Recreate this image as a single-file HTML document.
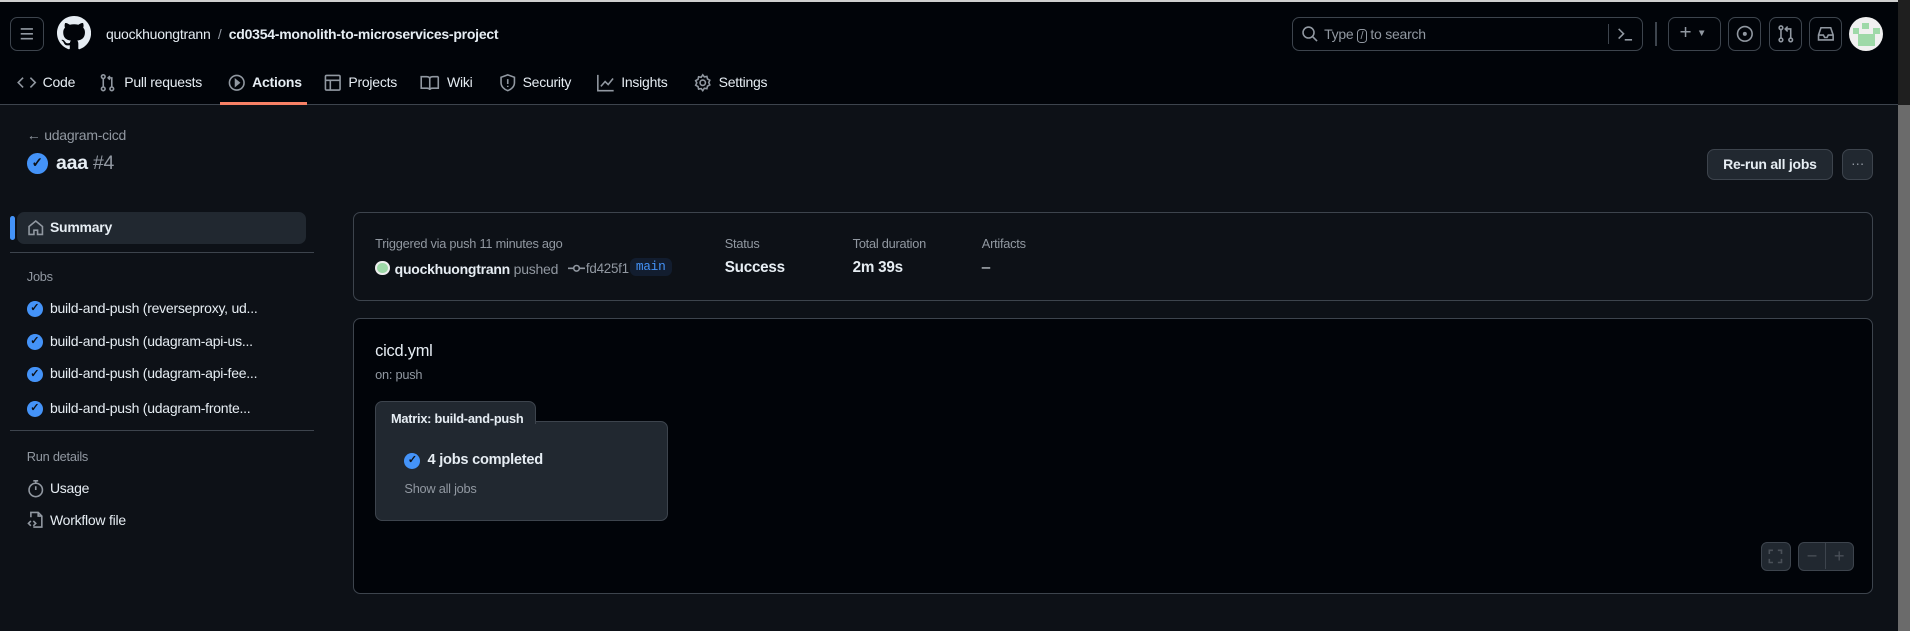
<!DOCTYPE html><html><head><meta charset="utf-8"><style>
*{box-sizing:border-box;margin:0;padding:0}
html,body{width:1910px;height:631px;overflow:hidden;background:#0d1117}
#w{zoom:1.21811;width:1568px;height:518px;position:relative;font-family:"Liberation Sans",sans-serif;color:#e6edf3;font-size:11.5px;background:#0d1117;letter-spacing:-0.2px}
.a{position:absolute;white-space:nowrap}
svg{display:block}
.btn{position:absolute;border:1px solid #3d444d;border-radius:6px}
.ic{fill:none;stroke:#9198a1;stroke-width:1.3}
.t{position:absolute;top:61px;font-size:11.5px}
.ti{position:absolute;top:61px;color:#9198a1;font-size:11.5px}
.ck{position:absolute;width:13px;height:13px;border-radius:50%;background:#4493f8;color:#0d1117;font-size:9px;text-align:center;line-height:13px;font-weight:bold}
</style></head><body><div id="w">
<div class="a" style="left:0;top:0;width:1558px;height:86px;background:#010409;border-bottom:1px solid #3d444d"></div>
<div class="a" style="left:1558px;top:0;width:10px;height:518px;background:#6b6b6b"></div>
<div class="a" style="left:1558px;top:0;width:10px;height:86px;background:#1f1f1f"></div>
<div class="a" style="left:0;top:0;width:1558px;height:2px;background:#cfcfcf"></div>
<div class="btn" style="left:8px;top:14px;width:28px;height:28px"><svg width="26" height="26" class="ic"><path d="M8 9h10M8 13h10M8 17h10"/></svg></div>
<svg class="a" style="left:47px;top:13px" width="28" height="28" viewBox="0 0 16 16"><path fill="#e6edf3" d="M8 0C3.58 0 0 3.58 0 8c0 3.54 2.290 6.53 5.47 7.59.4.07.55-.17.55-.38 0-.19-.01-.82-.01-1.490-2.010.37-2.530-.49-2.690-.94-.09-.23-.48-.94-.82-1.130-.28-.15-.68-.52-.01-.53.63-.01 1.080.58 1.230.82.72 1.210 1.870.87 2.330.66.07-.52.28-.87.51-1.070-1.780-.2-3.640-.89-3.640-3.950 0-.87.31-1.590.82-2.150-.08-.2-.36-1.020.08-2.120 0 0 .67-.21 2.200.82.64-.18 1.320-.27 2-.27.68 0 1.360.09 2 .27 1.530-1.040 2.200-.82 2.200-.82.44 1.100.16 1.920.08 2.120.51.56.82 1.270.82 2.150 0 3.070-1.870 3.750-3.650 3.950.29.25.54.73.54 1.480 0 1.070-.01 1.930-.01 2.200 0 .21.15.46.55.38A8.013 8.013 0 0016 8c0-4.420-3.580-8-8-8z"/></svg>
<div class="a" style="left:87px;top:21px;font-size:11.5px">quockhuongtrann <span style="color:#9198a1;margin:0 3px">/</span> <b>cd0354-monolith-to-microservices-project</b></div>
<div class="btn" style="left:1061px;top:14px;width:288px;height:28px"></div>
<svg class="a ic" style="left:1067px;top:20px" width="16" height="16"><circle cx="7" cy="7" r="4.5"/><path d="M10.5 10.5l3.5 3.5"/></svg>
<div class="a" style="left:1087px;top:21px;font-size:11.5px;color:#9198a1">Type <span style="border:1px solid #9198a1;border-radius:3px;padding:0 2px;font-size:9px">/</span> to search</div>
<div class="a" style="left:1320px;top:20px;width:1px;height:16px;background:#3d444d"></div>
<svg class="a ic" style="left:1326px;top:20px" width="16" height="16"><path d="M3 4l4 4-4 4M8 13h6"/></svg>
<div class="a" style="left:1359px;top:18px;width:1px;height:20px;background:#3d444d"></div>
<div class="btn" style="left:1369px;top:14px;width:44px;height:28px;color:#9198a1;font-size:17px;line-height:24px;padding-left:9px">+ <span style="font-size:8px;vertical-align:middle">▼</span></div>
<div class="btn" style="left:1419px;top:14px;width:27px;height:28px"><svg width="26" height="26" class="ic"><circle cx="13" cy="13" r="6"/><circle cx="13" cy="13" r="1" fill="#9198a1"/></svg></div>
<div class="btn" style="left:1452px;top:14px;width:27px;height:28px"><svg width="26" height="26" class="ic"><circle cx="9" cy="8" r="1.5"/><circle cx="9" cy="18" r="1.5"/><circle cx="17" cy="18" r="1.5"/><path d="M9 9.5v7M17 16.5V9h-4M14.5 7l-2 2 2 2"/></svg></div>
<div class="btn" style="left:1485px;top:14px;width:27px;height:28px"><svg width="26" height="26" class="ic"><path d="M7 14l2-6h8l2 6v4H7zM7 14h4l1 2h2l1-2h4"/></svg></div>
<div class="a" style="left:1518px;top:14px;width:28px;height:28px;border-radius:50%;background:#f0f0f0;overflow:hidden"><div class="a" style="left:11px;top:5px;width:5px;height:5px;background:#9ed9a8"></div><div class="a" style="left:3px;top:9px;width:5px;height:5px;background:#9ed9a8"></div><div class="a" style="left:20px;top:9px;width:5px;height:5px;background:#9ed9a8"></div><div class="a" style="left:7px;top:14px;width:14px;height:10px;background:#9ed9a8"></div></div>
<!-- tabs -->
<svg class="a ic" style="left:14px;top:61px" width="16" height="14"><path d="M5 3L1 7l4 4M11 3l4 4-4 4"/></svg><div class="t" style="left:35px">Code</div>
<svg class="a ic" style="left:81px;top:60px" width="14" height="16"><circle cx="3.5" cy="3" r="1.5"/><circle cx="3.5" cy="13" r="1.5"/><circle cx="10.5" cy="13" r="1.5"/><path d="M3.5 4.5v7M10.5 11.5V4h-3M9 2.5l-1.5 1.5 1.5 1.5"/></svg><div class="t" style="left:102px">Pull requests</div>
<svg class="a ic" style="left:186px;top:60px" width="16" height="16"><circle cx="8" cy="8" r="6"/><path d="M7 5.5l3 2.5-3 2.5z" fill="#9198a1"/></svg><div class="t" style="left:207px;font-weight:bold">Actions</div>
<svg class="a ic" style="left:265px;top:60px" width="16" height="16"><rect x="2" y="2" width="12" height="12" rx="1"/><path d="M2 6h12M6 6v8"/></svg><div class="t" style="left:286px">Projects</div>
<svg class="a ic" style="left:345px;top:60px" width="16" height="16"><path d="M1 3h4.5Q8 3 8 5v9Q8 12.5 5.5 12.5H1zM15 3h-4.5Q8 3 8 5M15 3v9.5h-4.5Q8 12.5 8 14"/></svg><div class="t" style="left:367px">Wiki</div>
<svg class="a ic" style="left:409px;top:60px" width="16" height="16"><path d="M8 1.5l5.5 2v4.5c0 3-2.5 5.5-5.5 6.5C5 13.5 2.5 11 2.5 8V3.5z"/><path d="M8 5v4M8 10.5v1"/></svg><div class="t" style="left:429px">Security</div>
<svg class="a ic" style="left:489px;top:60px" width="16" height="16"><path d="M1.5 1.5v13h13M4 11l3.5-4 2.5 2.5 4-5"/></svg><div class="t" style="left:510px">Insights</div>
<svg class="a ic" style="left:569px;top:60px" width="16" height="16"><circle cx="8" cy="8" r="2.2"/><path d="M8 1.5l1.3 1.7 2.1-.4.5 2.1 1.9 1-.9 1.9.9 2-1.9 1-.5 2.1-2.1-.4L8 14.5l-1.3-1.7-2.1.4-.5-2.1-1.9-1 .9-2-.9-1.9 1.9-1 .5-2.1 2.1.4z"/></svg><div class="t" style="left:590px">Settings</div>
<div class="a" style="left:181px;top:84px;width:71px;height:2px;background:#f78166"></div>
<!-- title -->
<div class="a" style="left:22px;top:104px;color:#9198a1;font-size:11.5px">← udagram-cicd</div>
<div class="a" style="left:22px;top:126px;width:17px;height:17px;border-radius:50%;background:#4493f8;color:#0d1117;font-size:11px;text-align:center;line-height:17px;font-weight:bold">✓</div>
<div class="a" style="left:46px;top:125px;font-size:16px"><b>aaa</b> <span style="color:#9198a1">#4</span></div>
<div class="a" style="left:1401px;top:122px;width:104px;height:26px;border:1px solid #3d444d;border-radius:6px;background:#212830;font-size:11.5px;font-weight:bold;text-align:center;line-height:24px">Re-run all jobs</div>
<div class="a" style="left:1512px;top:122px;width:26px;height:26px;border:1px solid #3d444d;border-radius:6px;background:#212830;color:#9198a1;text-align:center;line-height:22px">···</div>
<!-- sidebar -->
<div class="a" style="left:8px;top:177px;width:4px;height:20px;border-radius:2px;background:#4493f8"></div>
<div class="a" style="left:14px;top:174px;width:237px;height:26px;border-radius:6px;background:#212830"></div>
<svg class="a ic" style="left:21px;top:179px" width="16" height="16"><path d="M2.5 7L8 2.5 13.5 7v6.5h-4V10h-3v3.5h-4z"/></svg>
<div class="a" style="left:41px;top:180px;font-weight:bold">Summary</div>
<div class="a" style="left:8px;top:207px;width:250px;height:1px;background:#3d444d"></div>
<div class="a" style="left:22px;top:221px;color:#9198a1;font-size:10.5px">Jobs</div>
<div class="ck" style="left:22px;top:247px">✓</div><div class="a" style="left:41px;top:246px">build-and-push (reverseproxy, ud...</div>
<div class="ck" style="left:22px;top:274px">✓</div><div class="a" style="left:41px;top:273px">build-and-push (udagram-api-us...</div>
<div class="ck" style="left:22px;top:301px">✓</div><div class="a" style="left:41px;top:300px">build-and-push (udagram-api-fee...</div>
<div class="ck" style="left:22px;top:329px">✓</div><div class="a" style="left:41px;top:328px">build-and-push (udagram-fronte...</div>
<div class="a" style="left:8px;top:353px;width:250px;height:1px;background:#3d444d"></div>
<div class="a" style="left:22px;top:369px;color:#9198a1;font-size:10.5px">Run details</div>
<svg class="a ic" style="left:21px;top:393px" width="16" height="16"><circle cx="8" cy="9" r="5.5"/><path d="M8 9V6M6 1.5h4M8 1.5v2"/></svg><div class="a" style="left:41px;top:394px">Usage</div>
<svg class="a ic" style="left:21px;top:419px" width="16" height="16"><path d="M4 6V2h6l3 3v9H6M10 2v3h3M4 9l-2 2 2 2M6 9l2 2-2 2"/></svg><div class="a" style="left:41px;top:420px">Workflow file</div>
<!-- summary card -->
<div class="a" style="left:290px;top:174px;width:1248px;height:73px;border:1px solid #3d444d;border-radius:6px;background:#0d1117"></div>
<div class="a" style="left:308px;top:194px;color:#9198a1;font-size:10.5px">Triggered via push 11 minutes ago</div>
<div class="a" style="left:308px;top:214px;width:12px;height:12px;border-radius:50%;background:#9ed9a8;border:2px solid #eee"></div>
<div class="a" style="left:324px;top:214px;font-size:11.5px"><b>quockhuongtrann</b> <span style="color:#9198a1">pushed</span></div>
<svg class="a ic" style="left:466px;top:214px" width="14" height="12"><circle cx="7" cy="6" r="2.3"/><path d="M0 6h4.7M9.3 6H14"/></svg>
<div class="a" style="left:481px;top:214px;font-size:11px;color:#9198a1">fd425f1</div>
<div class="a" style="left:517px;top:212px;padding:1px 5px;border-radius:5px;background:#121d2f;color:#4493f8;font-family:'Liberation Mono',monospace;font-size:10.5px">main</div>
<div class="a" style="left:595px;top:194px;color:#9198a1;font-size:10.5px">Status</div>
<div class="a" style="left:595px;top:213px;font-weight:bold;font-size:12.5px">Success</div>
<div class="a" style="left:700px;top:194px;color:#9198a1;font-size:10.5px">Total duration</div>
<div class="a" style="left:700px;top:213px;font-weight:bold;font-size:12.5px">2m 39s</div>
<div class="a" style="left:806px;top:194px;color:#9198a1;font-size:10.5px">Artifacts</div>
<div class="a" style="left:806px;top:213px;font-size:12.5px">–</div>
<!-- graph card -->
<div class="a" style="left:290px;top:261px;width:1248px;height:227px;border:1px solid #3d444d;border-radius:6px;background:#010409"></div>
<div class="a" style="left:308px;top:281px;font-size:13.5px">cicd.yml</div>
<div class="a" style="left:308px;top:301px;color:#9198a1;font-size:10.5px">on: push</div>
<div class="a" style="left:308px;top:346px;width:240px;height:82px;border:1px solid #3d444d;border-radius:0 6px 6px 6px;background:#212830"></div>
<div class="a" style="left:308px;top:329px;width:132px;height:19px;border:1px solid #3d444d;border-bottom:none;border-radius:6px 6px 0 0;background:#212830"></div>
<div class="a" style="left:309px;top:345px;width:130px;height:3px;background:#212830"></div>
<div class="a" style="left:321px;top:337px;font-size:10.5px;font-weight:bold">Matrix: build-and-push</div>
<div class="ck" style="left:332px;top:372px">✓</div>
<div class="a" style="left:351px;top:371px;font-size:12px;font-weight:bold">4 jobs completed</div>
<div class="a" style="left:332px;top:395px;color:#9198a1;font-size:10.5px">Show all jobs</div>
<div class="a" style="left:1446px;top:445px;width:24px;height:24px;border:1px solid #3d444d;border-radius:5px;background:#212830"><svg width="22" height="22" fill="none" stroke="#4a5058" stroke-width="1.3"><path d="M6 9V6h3M13 6h3v3M16 13v3h-3M9 16H6v-3"/></svg></div>
<div class="a" style="left:1476px;top:445px;width:46px;height:24px;border:1px solid #3d444d;border-radius:5px;background:#212830;color:#4a5058;font-size:15px;line-height:21px"><span style="display:inline-block;width:22px;text-align:center;border-right:1px solid #3d444d">−</span><span style="display:inline-block;width:22px;text-align:center">+</span></div>
</div></body></html>
